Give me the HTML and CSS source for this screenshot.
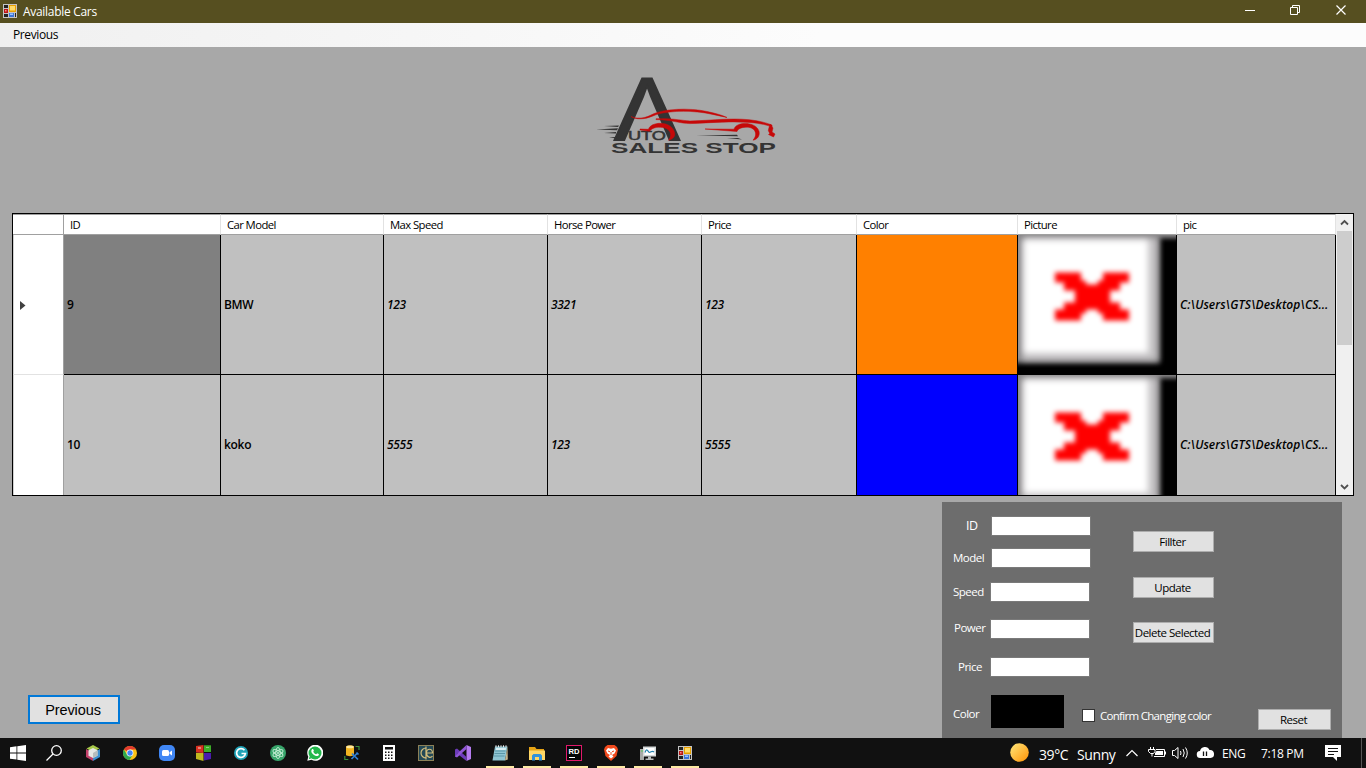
FILE: index.html
```html
<!DOCTYPE html>
<html lang="en">
<head>
<meta charset="utf-8">
<title>Available Cars</title>
<link rel="stylesheet" href="styles.css">
</head>
<body>
<svg class="defs" width="0" height="0">
  <defs>
    <filter id="soft" x="-20%" y="-20%" width="140%" height="140%"><feGaussianBlur stdDeviation="2.6"/></filter>
    <filter id="softer" x="-20%" y="-20%" width="140%" height="140%"><feGaussianBlur stdDeviation="3.2"/></filter>
    <g id="form-icon">
      <rect width="14" height="14" fill="#c4c4c4"/>
      <path d="M1 1h4v3H1zM1 10h4v3H1z" fill="#222"/>
      <rect x="6" y="1" width="7" height="7" fill="#e8a000"/><rect x="7" y="2" width="5" height="4.500" fill="#ffdc6a"/>
      <rect x="1" y="5" width="4" height="4" fill="#b81414"/><rect x="2" y="6" width="1.500" height="1.500" fill="#f88"/>
      <rect x="6" y="9" width="5" height="4" fill="#3c74d8"/><rect x="7" y="9.500" width="3" height="1.500" fill="#9ac4ff"/>
      <path d="M12 9h1v4h-1z" fill="#222"/>
    </g>
    <symbol id="missing" viewBox="0 0 158 139" preserveAspectRatio="none">
      <rect width="158" height="139" fill="#000"/>
      <g filter="url(#soft)">
        <rect x="-20" y="-20" width="200" height="23" fill="#929092"/>
        <rect x="-20" y="-20" width="162" height="148" fill="#868486"/>
      </g>
      <rect x="4" y="3" width="135" height="122" fill="#c6c4c6" filter="url(#softer)"/>
      <rect x="6" y="5" width="124" height="113" fill="#fff" filter="url(#softer)"/>
      <path filter="url(#soft)" fill="red" d="M37 37.500h26v8h5v4h12v-4h5v-8h26v10h-9v8h-10v12h10v7h9v11h-26v-7h-5v-4h-12v4h-5v7h-26v-11h9v-7h11v-12h-11v-8h-9z"/>
    </symbol>
  </defs>
</svg>
<div class="window">
  <header class="titlebar">
    <svg class="app-icon" width="14" height="14"><use href="#form-icon"/></svg>
    <span class="title">Available Cars</span>
    <svg class="controls" width="121" height="23" fill="none" stroke="#fff">
      <path d="M0 10.500h10"/>
      <path d="M45.500 7.500h7v7h-7zM47.500 7.500v-2h7v7h-2"/>
      <path d="M91.500 5.500l9 9M100.500 5.500l-9 9" stroke-width="1.200"/>
    </svg>
  </header>
  <nav class="menu"><span>Previous</span></nav>
  <main class="main">
    <div class="logo">
      <svg width="200" height="100" viewBox="585 65 200 100">
        <g fill="#343434" font-family="Liberation Sans, sans-serif">
          <text x="614" y="139.500" font-size="89" textLength="66" lengthAdjust="spacingAndGlyphs" stroke="#343434" stroke-width="1.800">Λ</text>
          <text x="628" y="140" font-size="12.500" textLength="38" lengthAdjust="spacingAndGlyphs" stroke="#343434" stroke-width=".5">UTO</text>
          <text x="611" y="153" font-size="14.500" font-weight="bold" textLength="165" lengthAdjust="spacingAndGlyphs">SALES STOP</text>
          <path d="M604 126l15-.6-1 1.600zM596 129.500l22-1.200-1 2zM604 133l12-1v1.600zM609 137.500l6-.6v1.400zM696 135.500l41-.8 1 1.600zM727 138l11 0 4 1.400z"/>
        </g>
        <g fill="#c60808" stroke="#c60808" stroke-width=".5">
          <path d="M631 116.500c5 2.500 13 2 19-1 12-7 39-8 57-4 8 1.800 15 3.500 20 6-7-1.500-15-3.500-22-4.600-18-2.800-41-2-52 3-8 3.600-17 4-22 .6z"/>
          <path d="M656 118.800c15-.8 24 1.500 34 2.200 27-.5 56-6 82 4l0 1.800c-21-8-57-4-82-3.200-9 0-20-4-34-4z"/>
          <path d="M770 124l3 4-1 4 3 2-1.500 3-5-2.500c3-1-1-3 0-5z"/>
          <path d="M640 129l8.500 .3c2-8 23-9 26 3 1 4-1 6.500-6 8 5-6 1-13-8-13-6-.3-9 1.500-11 4l-9.500-1.400z"/>
          <path d="M705 129l29 .2c2-8 22-8 25 2 1 4-1 8-6 9 6-7 1-13.500-7-13-6 .3-8 2-9 4.300z"/>
        </g>
      </svg>
    </div>
    <section class="table">
      <div class="grid">
        <div class="h corner"></div><div class="h">ID</div><div class="h">Car Model</div><div class="h">Max Speed</div><div class="h">Horse Power</div><div class="h">Price</div><div class="h">Color</div><div class="h">Picture</div><div class="h last">pic</div>
        <div class="rowhead"><svg width="6" height="9"><path d="M0 0l5.500 4.500L0 9z" fill="#404040"/></svg></div>
        <div class="c selected">9</div><div class="c">BMW</div><div class="c i">123</div><div class="c i">3321</div><div class="c i">123</div><div class="c orange"></div><div class="c pic"><svg width="158" height="139"><use href="#missing"/></svg></div><div class="c i path">C:\Users\GTS\Desktop\CS...</div>
        <div class="rowhead"></div>
        <div class="c">10</div><div class="c">koko</div><div class="c i">5555</div><div class="c i">123</div><div class="c i">5555</div><div class="c blue"></div><div class="c pic"><svg width="158" height="139"><use href="#missing"/></svg></div><div class="c i path">C:\Users\GTS\Desktop\CS...</div>
      </div>
      <div class="scroll">
        <svg width="15" height="17" fill="none" stroke="#505050" stroke-width="1.800"><path d="M4 10.500l3.500-3.500 3.500 3.500"/></svg>
        <div class="thumb"></div>
        <svg width="15" height="17" fill="none" stroke="#505050" stroke-width="1.800"><path d="M4 7l3.500 3.500L11 7"/></svg>
      </div>
    </section>
    <section class="lower">
      <button class="prev">Previous</button>
      <form class="panel">
        <div class="fields">
          <div class="field f-id"><label>ID</label><input type="text"></div>
          <div class="field f-model"><label>Model</label><input type="text"></div>
          <div class="field f-speed"><label>Speed</label><input type="text"></div>
          <div class="field f-power"><label>Power</label><input type="text"></div>
          <div class="field f-price"><label>Price</label><input type="text"></div>
          <div class="field f-color"><label>Color</label><div class="swatch"></div></div>
        </div>
        <div class="actions">
          <div class="buttons">
            <button type="button">Fillter</button>
            <button type="button">Update</button>
            <button type="button" class="del">Delete Selected</button>
          </div>
          <div class="confirm">
            <span class="box"></span><span class="confirm-text">Confirm Changing color</span>
            <button type="button" class="reset">Reset</button>
          </div>
        </div>
      </form>
    </section>
  </main>
  <footer class="taskbar">
    <div class="apps">
      <div class="app"><svg width="16" height="16" fill="#fff"><path d="M0 2.300l6.500-1v6.200H0zM7.300 1.200L16 0v7.500H7.300zM0 8.400h6.500v6.200L0 13.700zM7.300 8.400H16V16l-8.700-1.200z"/></svg></div>
      <div class="app"><svg class="search" width="16" height="16" fill="none" stroke="#fff" stroke-width="1.300"><circle cx="10.500" cy="5.500" r="4.800"/><path d="M7 9L.5 15.500"/></svg></div>
      <div class="app"><svg width="16" height="16"><path d="M8 0l6.500 3.500L8 7 1.500 3.500z" fill="#a7c84a"/><path d="M1 4l7 4v8l-7-4z" fill="#c2416a"/><path d="M15 4L8 8v8l7-4z" fill="#3d8fd0"/><path d="M8 3l4.500 2.300v5.400L8 13l-4.500-2.300V5.300z" fill="#e6e8e6"/><path d="M8 8l4.500-2.700v5.400L8 13z" fill="#b7bdbd"/></svg></div>
      <div class="app"><svg width="14" height="14" viewBox="0 0 14 14"><circle cx="7" cy="7" r="7" fill="#fbc116"/><path d="M7 7L.9 3.500A7 7 0 0 1 13.100 3.500H7z" fill="#e33b2e"/><path d="M.9 3.500A7 7 0 0 0 6.500 14L10 8.500 7 7 4 8.700z" fill="#2da94f"/><circle cx="7" cy="7" r="3.400" fill="#fff"/><circle cx="7" cy="7" r="2.700" fill="#4285f4"/></svg></div>
      <div class="app"><svg width="16" height="16"><rect width="16" height="16" rx="5" fill="#4087f5"/><rect x="3" y="5" width="7" height="6" rx="1.500" fill="#fff"/><path d="M10.500 7.300L13 5.500v5l-2.500-1.800z" fill="#fff"/></svg></div>
      <div class="app"><svg width="15" height="16"><path d="M0 1l7.500-1V8L0 7.500z" fill="#d83020"/><path d="M8 .3H15v6.700H8z" fill="#3cae28"/><path d="M0 8H7.500V16L0 14z" fill="#c0b820"/><path d="M8 8H15V14l-7 1.500z" fill="#4a1cae"/><path d="M2 2h3v2H2zM10 2h3v1h-3z" fill="#fff" opacity=".4"/></svg></div>
      <div class="app"><svg width="14" height="14"><circle cx="7" cy="7" r="7" fill="#20a3b8"/><path d="M10.500 4.300A4.400 4.400 0 1 0 11.400 7.500H7.500" fill="none" stroke="#fff" stroke-width="1.700"/></svg></div>
      <div class="app"><svg width="16" height="16" fill="none" stroke="#c9f0d8" stroke-width=".9"><circle cx="8" cy="8" r="8" fill="#38a56b" stroke="none"/><ellipse cx="8" cy="8" rx="2.200" ry="5.600"/><ellipse cx="8" cy="8" rx="2.200" ry="5.600" transform="rotate(60 8 8)"/><ellipse cx="8" cy="8" rx="2.200" ry="5.600" transform="rotate(120 8 8)"/><circle cx="8" cy="8" r=".7"/></svg></div>
      <div class="app"><svg width="16" height="16"><path d="M.3 15.700l1-4A8 8 0 1 1 4.500 14.800z" fill="#fff"/><circle cx="8" cy="8" r="6.500" fill="#22b84c"/><path d="M1.700 14.300l1-3 2 2z" fill="#22b84c"/><path d="M5 4.300c.8-.7 1.400-.2 1.900 1.300L6.300 6.700c.8 1.400 1.700 2.100 2.900 2.600l1-1c1.400.5 2 1 1.600 1.700-1.500 3-7.800-.8-7.500-4.200z" fill="#fff"/></svg></div>
      <div class="app"><svg width="16" height="16"><path d="M2 2c0-2 8-2 8 0V10c-1 1.500-7 1.500-8 0z" fill="#f2b420"/><ellipse cx="6" cy="1.900" rx="3.800" ry="1.400" fill="#ffe9a0"/><path d="M11.500 1.500H15V5M.8 11v3.500H4.300" fill="none" stroke="#3c8f3c" stroke-width="1.200"/><path d="M7.500 14l6-6M8 8.500l6 6M12.500 7.500l2 2" stroke="#2f7fd6" stroke-width="1.700"/></svg></div>
      <div class="app"><svg width="12" height="16"><rect width="12" height="16" fill="#fff"/><path d="M2 2h8v2.500H2zM2 6.500h1.500V8H2zM5 6.500h1.500V8H5zM8 6.500h1.500V8H8zM2 9.500h1.500V11H2zM5 9.500h1.500V11H5zM8 9.500h1.500V11H8zM2 12.500h1.500V14H2zM5 12.500h1.500V14H5zM8 12.500h1.500V14H8z" fill="#111"/></svg></div>
      <div class="app"><svg width="16" height="16" fill="none" stroke="#d3bd7c" stroke-width="1.200"><rect x=".5" y=".5" width="15" height="15" fill="#244956" stroke="#8c8158" stroke-width="1"/><path d="M8 3A5 5 0 1 0 8 13M8 1.500v13M8 8h6.500C14.500 3 8.500 3 8.500 8c0 5 4.500 5 6 3"/></svg></div>
      <div class="app"><svg width="16" height="16"><path d="M11.500 0L16 2v12l-4.500 2z" fill="#b57cf0"/><path d="M0 4.500L2 3.500 11.500 12v4L2 8.500v3.500L0 11.500z" fill="#6c3bb8"/><path d="M0 11.500l2 1L11.500 4V0L4 7z" fill="#9056d6"/></svg></div>
      <div class="app open"><svg width="16" height="16"><path d="M3 1.500h12.500L13 15.500H.5z" fill="#8fc5d2"/><path d="M4 3h10l-.3 2H3.700z" fill="#d8eef2"/><path d="M15.500 1.500l.3 13-2.800 1z" fill="#c9b78c"/><path d="M3 6h10.500M2.500 8.500H13M2 11h10.500" stroke="#5b98a8"/><path d="M4 .3v2M6.500 .3v2M9 .3v2M11.500 .3v2M14 .3v2" stroke="#eee"/></svg></div>
      <div class="app open"><svg width="16" height="15"><path d="M0 1h6l1.500 2H15v4H0z" fill="#e6a315"/><path d="M0 4.500h16V14H0z" fill="#ffd766"/><path d="M3 14.500V9.500l1.500-1.500h7L13 9.500v5h-3V11H6v3.500z" fill="#3293dc"/></svg></div>
      <div class="app open"><svg width="16" height="16"><rect x=".5" y=".5" width="15" height="15" fill="#050505" stroke="#e0196b"/><text x="2.500" y="9" font-size="8" font-weight="bold" fill="#fff" font-family="Liberation Sans, sans-serif" textLength="11" lengthAdjust="spacingAndGlyphs">RD</text><path d="M3 12.500h6" stroke="#fff"/></svg></div>
      <div class="app open"><svg width="14" height="16"><path d="M3.500 0h7L13 2l1 2.500-1.500 6.500L7 16l-5.500-5L0 4.500 1 2z" fill="#f24a1d"/><path d="M4 3l3 .8L10 3l2 2.500-1.500 3L8 10l1.500 1.500L7 13.500l-2.500-2L6 10 3.500 8.500 2 5.500z" fill="#fff"/><path d="M4 6l2 .8M10 6l-2 .8M7 7v3" stroke="#f24a1d"/></svg></div>
      <div class="app open"><svg width="16" height="16"><path d="M0 4h4v11H0z" fill="#a8aaa8"/><path d="M3 1.500h13v10H3z" fill="#d4d8d8"/><path d="M4.500 3h10v7h-10z" fill="#fff"/><path d="M5 7.500c2-6 3 0 4.500 0S12 5 14 7" fill="none" stroke="#2482ae" stroke-width="1.200"/><path d="M8 11.500h3v2h2.500V15h-8v-1.500H8z" fill="#b9bcbc"/><path d="M1 6h2" stroke="#5c5"/></svg></div>
      <div class="app open"><svg width="14" height="14"><use href="#form-icon"/></svg></div>
    </div>
    <div class="tray">
      <svg class="sun" width="19" height="19"><defs><linearGradient id="sg" x1="0" y1="0" x2="1" y2="1"><stop offset=".1" stop-color="#ffe070"/><stop offset=".9" stop-color="#ff9a10"/></linearGradient></defs><circle cx="9.500" cy="9.500" r="9.300" fill="url(#sg)"/></svg>
      <span class="temp">39°C</span><span class="sky">Sunny</span>
      <svg class="sys" width="90" height="20" fill="none" stroke="#fff">
        <path d="M.5 13L6 7.500l5.500 5.500" stroke-width="1.200"/>
        <path d="M30 6.500h8.500v7h-10.500M39.500 8.500v3M24.500 4v3M27.500 4v3M22.500 6.500h6.500v2l-1.500 2h-3l-2-2zM26 10v3.500"/><path d="M30.500 8h6.500v4h-8v-2z" fill="#fff" stroke="none"/>
        <path d="M46.500 7.500h2l3.500-3v11l-3.500-3h-2zM54.500 8q1 2 0 4M57 6q2.500 4 0 8M59.500 4.500q3.500 5.500 0 11"/>
        <path d="M74.500 15a3.500 3.500 0 0 1-.5-7 5 5 0 0 1 9.500-1 3.800 3.800 0 0 1 1 8z" fill="#fff" stroke="none"/><path d="M77.500 8.500v4.500M80.500 8.500v4.500" stroke="#111" stroke-width="1.300"/>
      </svg>
      <span class="lang">ENG</span><span class="time">7:18 PM</span>
      <svg class="note" width="16" height="16"><path d="M0 0h16v12h-4v4l-4-4H0z" fill="#fff"/><path d="M3 3.500h10M3 6.500h10M3 9.500h6" stroke="#111"/></svg>
      <div class="peek"></div>
    </div>
  </footer>
</div>
</body>
</html>
```
FILE: styles.css
```css
* { box-sizing: border-box; }
body { margin: 0; font-family: "Open Sans", "Noto Sans", sans-serif; font-size: 12px; color: #000; background: #a8a8a8; overflow: hidden; }
svg { display: block; flex: none; }
.defs { position: absolute; }
.window { width: 1366px; height: 768px; display: flex; flex-direction: column; }
.titlebar { height: 23px; background: #564f20; color: #fff; display: flex; align-items: center; padding-left: 3px; }
.app-icon { margin-top: -1px; }
.title { margin-left: 6px; letter-spacing: -.3px; }
.controls { margin-left: auto; }
.menu { height: 24px; background: linear-gradient(90deg, #f0f0f0, #fcfcfc 60%); padding: 0 13px; line-height: 24px; letter-spacing: -.38px; }
.main { height: 691px; display: flex; flex-direction: column; }
.logo { height: 166px; padding: 18px 0 0 585px; }
.table { margin-left: 12px; width: 1342px; height: 283px; border: 1px solid #000; display: flex; overflow: hidden; }
.grid { width: 1323px; display: grid; grid-template-columns: 51px 157px 163px 164px 154px 155px 161px 159px 159px; grid-template-rows: 21px 140px 140px; height: 301px; }
.h { background: #fff; border-top: 1px solid #a0a0a0; border-bottom: 1px solid #a0a0a0; border-right: 1px solid #e2e2e2; padding-left: 6px; font-size: 11.300px; line-height: 20px; letter-spacing: -.58px; }
.corner, .rowhead { border-right: 1px solid #a0a0a0; }
.rowhead { background: #fff; display: flex; align-items: center; padding-left: 6px; border-bottom: 1px solid #e2e2e2; border-left: 1px solid #d0d0d0; }
.rowhead svg { margin-top: 1px; }
.c { background: #c0c0c0; border-right: 1px solid #000; border-bottom: 1px solid #000; display: flex; align-items: center; padding-left: 3px; font-weight: 600; overflow: hidden; letter-spacing: -.3px; white-space: nowrap; }
.i { font-style: italic; }
.path { letter-spacing: .03px; }
.selected { background: #808080; }
.orange { background: #ff8000; }
.blue { background: #00f; }
.pic { padding: 0; }
.scroll { width: 17px; height: 281px; background: #f0f0f0; padding: 0 1px; display: flex; flex-direction: column; }
.thumb { height: 114px; background: #cdcdcd; margin-bottom: auto; }
.lower { flex: 1; display: flex; align-items: flex-start; padding: 6px 24px 0 28px; justify-content: space-between; }
button { font-family: "Open Sans", sans-serif; font-size: 11.500px; letter-spacing: -.5px; color: #000; background: #e1e1e1; border: 1px solid #adadad; padding: 0 2px 0 0; white-space: nowrap; }
.prev { width: 92px; height: 29px; margin-top: 193px; border: 2px solid #0078d7; font-family: "Liberation Sans", sans-serif; font-size: 14.500px; letter-spacing: -.1px; }
.panel { width: 400px; height: 236px; background: #6d6d6d; display: flex; color: #fff; font-size: 11.500px; letter-spacing: -.5px; }
.fields { width: 140px; padding-top: 14px; }
.field { height: 20px; display: flex; align-items: center; padding-left: 11px; }
.field label { width: 37px; flex: none; line-height: 18px; }
.field input { width: 100px; flex: none; height: 20px; border: 1px solid #7a7a7a; background: #fff; padding: 0; }
.f-id { padding-left: 24px; font-size: 12.500px; }
.f-id label { width: 25px; }
.f-model { margin-top: 12px; }
.f-model label { width: 38px; }
.f-speed { margin-top: 14px; }
.f-power { margin-top: 17px; padding-left: 12px; }
.f-power label { width: 36px; padding-bottom: 2px; }
.f-price { margin-top: 18px; padding-left: 16px; }
.f-price label { width: 32px; }
.f-color { margin-top: 18px; height: 33px; }
.f-color label { width: 38px; padding-top: 4px; }
.swatch { width: 73px; height: 33px; background: #000; }
.actions { flex: 1; }
.buttons { height: 207px; display: flex; flex-direction: column; padding: 29px 0 0 51px; }
.buttons button { width: 81px; height: 21px; margin-bottom: 25px; }
.buttons button + button { margin-bottom: 24px; }
.confirm { display: flex; align-items: flex-start; height: 21px; }
.box { width: 13px; height: 13px; border: 1px solid #333; background: #fff; }
.confirm-text { margin-left: 5px; line-height: 14px; letter-spacing: -.7px; }
.reset { width: 73px; height: 21px; margin-left: auto; margin-right: 11px; }
.taskbar { height: 30px; background: #111; display: flex; justify-content: space-between; color: #fff; }
.apps { display: grid; grid-template-columns: 36px 38px repeat(17, 37px); }
.app { height: 30px; display: flex; align-items: center; justify-content: center; }
.search { margin-right: 2px; }
.open { background: linear-gradient(#fdeaa4, #fdeaa4) 50% 100% / 28px 2px no-repeat; }
.tray { width: 356px; display: flex; align-items: center; }
.sun { margin: -1px 10px 0 0; }
.temp, .sky { font-size: 14px; width: 38px; letter-spacing: -.4px; margin-top: 2px; }
.sky { width: 49px; }
.lang { width: 39px; margin-left: 6px; letter-spacing: -.3px; }
.time { width: 64px; letter-spacing: -.3px; }
.peek { margin-left: auto; margin-right: 4px; width: 1px; height: 30px; background: #555; }
```
